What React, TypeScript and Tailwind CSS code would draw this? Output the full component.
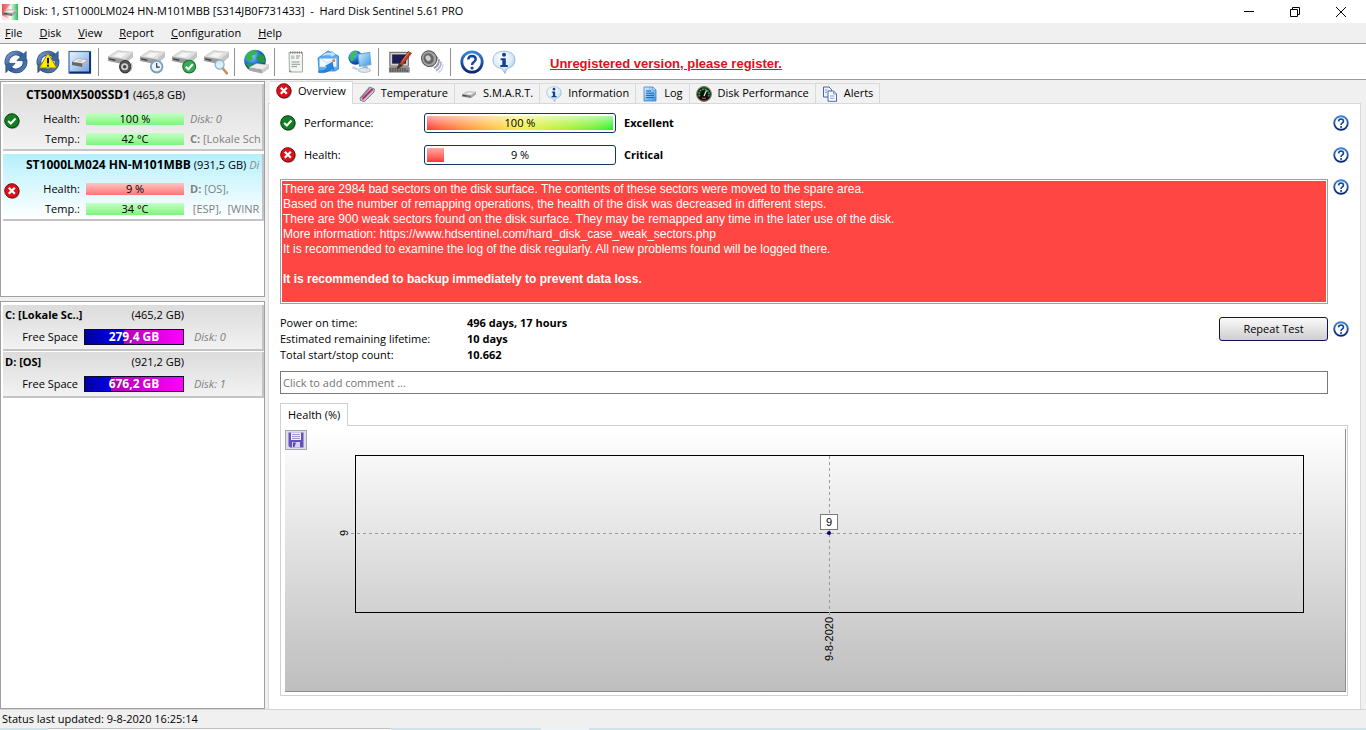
import React, { useState } from 'react';

interface Disk {
  name: string;
  size: string;
  index: string;
  health: number;
  temp: string;
  info: React.ReactNode;
  volumes: React.ReactNode;
  ok: boolean;
}

interface Volume {
  name: string;
  size: string;
  free: string;
  used: number;
  disk: string;
}

type IconProps = { className?: string };

// Shared gradients used by the icons below
const Gradients: React.FC = () => (
  <svg className="absolute h-0 w-0" aria-hidden="true">
    <defs>
      <linearGradient id="navy" gradientUnits="userSpaceOnUse" x1="2" y1="2" x2="24" y2="24">
        <stop offset="0" stopColor="#86a9d6" />
        <stop offset="0.5" stopColor="#2d5796" />
        <stop offset="1" stopColor="#5f86bd" />
      </linearGradient>
      <linearGradient id="sky" x1="0" y1="0" x2="1" y2="1">
        <stop offset="0" stopColor="#d5efff" />
        <stop offset="1" stopColor="#3a97e4" />
      </linearGradient>
      <radialGradient id="globe" cx="0.35" cy="0.3" r="0.8">
        <stop offset="0" stopColor="#8fd0ff" />
        <stop offset="0.5" stopColor="#1c6fd0" />
        <stop offset="1" stopColor="#06287a" />
      </radialGradient>
      <linearGradient id="ring" x1="0" y1="0" x2="0" y2="1">
        <stop offset="0" stopColor="#3a86d8" />
        <stop offset="1" stopColor="#0a2472" />
      </linearGradient>
      <radialGradient id="bubble" cx="0.4" cy="0.3" r="0.8">
        <stop offset="0" stopColor="#ffffff" />
        <stop offset="0.6" stopColor="#d6e8f8" />
        <stop offset="1" stopColor="#7fb0de" />
      </radialGradient>
      <linearGradient id="tile" x1="0" y1="0" x2="1" y2="1">
        <stop offset="0" stopColor="#eef6ff" />
        <stop offset="1" stopColor="#6b9ee2" />
      </linearGradient>
      <linearGradient id="appBack" x1="0" y1="0" x2="1" y2="0">
        <stop offset="0" stopColor="#f04040" />
        <stop offset="0.5" stopColor="#ffffff" />
        <stop offset="1" stopColor="#20c050" />
      </linearGradient>
    </defs>
  </svg>
);

const Drive: React.FC = () => (
  <g>
    <path d="M2 8.5 L11 2.5 L26 4 L18 11 Z" fill="#e0e0e0" stroke="#b5b5b5" strokeWidth="0.5" />
    <path d="M2 8.5 L18 11 L18 16 L2 12.5 Z" fill="#9c9c9c" />
    <path d="M18 11 L26 4 L26 9 L18 16 Z" fill="#c4c4c4" />
    <path d="M7 8 L12 4.5 L20 5.4 L15 9.2 Z" fill="#f6f6f6" />
    <path d="M3 10.5 L9 11.8" stroke="#444" strokeWidth="1.4" />
  </g>
);

const MiniDrive: React.FC = () => (
  <g>
    <path d="M1 8.5 L6.5 5.5 L15 6 L10 9.5 Z" fill="#d8d8d8" stroke="#9a9a9a" strokeWidth="0.4" />
    <path d="M1 8.5 L10 9.5 L10 12 L1 10.5 Z" fill="#777" />
    <path d="M10 9.5 L15 6 L15 8.5 L10 12 Z" fill="#a5a5a5" />
    <path d="M5.5 8 L8 6.7 L11.5 7 L9 8.5 Z" fill="#f5f5f5" />
    <path d="M2 9.4 L5 9.9" stroke="#333" strokeWidth="0.8" />
  </g>
);

const AppIcon: React.FC<IconProps> = ({ className }) => (
  <svg viewBox="0 0 16 16" className={className}>
    <rect width="16" height="16" fill="url(#appBack)" />
    <path d="M0 0 H9 L0 9 Z" fill="#ef5a58" opacity="0.6" />
    <path d="M0 16 V11 L8 16 Z" fill="#fff" opacity="0.8" />
    <MiniDrive />
  </svg>
);

const RefreshArrows: React.FC = () => (
  <g>
    <path d="M3.6 15.5 A9.6 9.6 0 0 1 19.5 6" fill="none" stroke="#1c3d70" strokeWidth="5.2" />
    <path d="M22.4 10.5 A9.6 9.6 0 0 1 6.5 20" fill="none" stroke="#1c3d70" strokeWidth="5.2" />
    <path d="M24 1.5 V11.5 H14 Z" fill="#3b669f" stroke="#1c3d70" strokeWidth="0.8" />
    <path d="M2 24.5 V14.5 H12 Z" fill="#3b669f" stroke="#1c3d70" strokeWidth="0.8" />
    <path d="M3.6 15.5 A9.6 9.6 0 0 1 19.5 6" fill="none" stroke="url(#navy)" strokeWidth="4" />
    <path d="M22.4 10.5 A9.6 9.6 0 0 1 6.5 20" fill="none" stroke="url(#navy)" strokeWidth="4" />
  </g>
);

const RefreshIcon = () => (
  <svg viewBox="0 0 26 26" className="h-6 w-6"><RefreshArrows /></svg>
);

const RefreshWarningIcon = () => (
  <svg viewBox="0 0 26 26" className="h-6 w-6">
    <RefreshArrows />
    <path d="M13 3.5 L22.5 19.5 H3.5 Z" fill="#ffee00" stroke="#8a7a00" strokeWidth="1" strokeLinejoin="round" />
    <path d="M13 8.5 V14.5" stroke="#111" strokeWidth="2.2" />
    <circle cx="13" cy="17" r="1.2" fill="#111" />
  </svg>
);

const SurfaceIcon = () => (
  <svg viewBox="0 0 24 24" className="h-6 w-6">
    <rect x="1" y="1.5" width="21.5" height="21.5" fill="url(#tile)" stroke="#3a68b8" strokeWidth="1.2" />
    <path d="M22 2 V22.5 H1.5" fill="none" stroke="#122a66" strokeWidth="1.8" />
    <path d="M4 12 L10 8.5 L19.5 10 L14.5 13.5 Z" fill="#f4f4f4" stroke="#888" strokeWidth="0.5" />
    <path d="M4 12 L14.5 13.5 V17 L4 15 Z" fill="#666" />
    <path d="M14.5 13.5 L19.5 10 V13 L14.5 17 Z" fill="#b5b5b5" />
    <ellipse cx="12" cy="11" rx="3" ry="1.1" fill="#c8c8c8" />
  </svg>
);

const DriveSpeakerIcon = () => (
  <svg viewBox="0 0 27 27" className="h-7 w-7">
    <Drive />
    <ellipse cx="18.5" cy="18" rx="5.4" ry="6" fill="#555" stroke="#333" />
    <circle cx="18" cy="18" r="3.4" fill="#d0d0d0" />
    <circle cx="18" cy="18" r="1.7" fill="#444" />
    <path d="M24.5 15 Q26 18 23.5 22.5" stroke="#aaa" fill="none" />
  </svg>
);

const DriveClockIcon = () => (
  <svg viewBox="0 0 27 27" className="h-7 w-7">
    <Drive />
    <circle cx="18" cy="18" r="5.6" fill="#e9f5fd" stroke="#7d9fba" strokeWidth="1.8" />
    <path d="M18 14.5 V18.5 H21" stroke="#223344" fill="none" strokeWidth="1.1" />
  </svg>
);

const DriveCheckIcon = () => (
  <svg viewBox="0 0 27 27" className="h-7 w-7">
    <Drive />
    <circle cx="18.5" cy="18" r="6.2" fill="#35ad53" stroke="#14702a" />
    <path d="M15.3 18 L17.8 20.5 L22 15.5" stroke="#fff" fill="none" strokeWidth="2" />
  </svg>
);

const DriveSearchIcon = () => (
  <svg viewBox="0 0 27 27" className="h-7 w-7">
    <Drive />
    <path d="M19.5 19 L24 24.5" stroke="#c98c5a" strokeWidth="2.4" strokeLinecap="round" />
    <circle cx="17" cy="16" r="4.3" fill="#d8f0fc" fillOpacity="0.9" stroke="#8fb3cc" strokeWidth="1.3" />
  </svg>
);

const GlobeDriveIcon = () => (
  <svg viewBox="0 0 28 28" className="h-7 w-7">
    <circle cx="13" cy="12.5" r="10.8" fill="url(#globe)" />
    <path d="M5 6.5 Q9 1.8 15 2 L14 5.5 L10 8 L11 11 L7 13.5 L3.5 11 Z" fill="#35b44a" />
    <path d="M14 10 L18 5.5 L22.5 8.5 L23 15 L18 14.5 Z" fill="#249a3d" />
    <path d="M4 16 L9 14.5 L11 20 L8 21 Z" fill="#249a3d" />
    <path d="M7 19.5 L14.5 15.5 L27 17 L20 22 Z" fill="#ededed" stroke="#aaa" strokeWidth="0.5" />
    <path d="M7 19.5 L20 22 V25.5 L7 22.5 Z" fill="#a8a8a8" />
    <path d="M20 22 L27 17 V20.5 L20 25.5 Z" fill="#cccccc" />
  </svg>
);

const ReportIcon = () => (
  <svg viewBox="0 0 24 24" className="h-6 w-6">
    <path d="M5 2.5 H18.5 V22 H5.5 Z" fill="#f3f5f2" stroke="#a3aaa3" />
    <path d="M6 2.5 H18" stroke="#777" strokeWidth="2" strokeDasharray="1.2 1" />
    <path d="M12 6 H16 M12 8 H15 M7.5 12 H15.5 M7.5 14.3 H16 M7.5 16.6 H13" stroke="#8f9a94" />
    <rect x="7" y="5.5" width="3.4" height="3.4" fill="#b9cdbd" />
    <path d="M5 22 L6 20 L8 22 Z" fill="#6f9f77" />
  </svg>
);

const MailIcon = () => (
  <svg viewBox="0 0 24 24" className="h-6 w-6">
    <path d="M2 8 L12 1 L22.5 6 V19 L19 21 H3 Z" fill="#5aaef0" stroke="#2b7ed0" strokeWidth="0.8" />
    <path d="M3.5 8.5 H20.5 V17 H3.5 Z" fill="#f5faff" stroke="#9bc3ea" strokeWidth="0.6" />
    <path d="M4 8.5 L11 13 L20 8.5" fill="none" stroke="#b9d3ec" strokeWidth="0.8" />
    <rect x="16.5" y="9.3" width="2.6" height="2.6" fill="#d97b5a" />
    <path d="M5 7 Q8 1.5 15 2.5 L15.5 1 L20 5 L14.5 7.5 L14.7 5.8 Q9 5 5 7 Z" fill="#bfe2ff" stroke="#3a8fe0" strokeWidth="0.5" />
    <path d="M2.5 21 Q9 22 12 17 L9.5 16 L16.5 12 L17.5 19.5 L15.5 18.5 Q11 24 2.5 22.5 Z" fill="#2586e4" stroke="#0d5db0" strokeWidth="0.5" />
  </svg>
);

const NetworkIcon = () => (
  <svg viewBox="0 0 25 25" className="h-6 w-6">
    <circle cx="7.8" cy="8" r="7.4" fill="url(#globe)" />
    <path d="M3 4 Q6 1 10 1.5 L8 6 L5 8 L6 11 L3.5 12 L1.5 8 Z" fill="#3cbf55" />
    <path d="M10.5 4.5 L22.5 2.5 L23.8 15 L12 17 Z" fill="url(#sky)" stroke="#6aa8dc" strokeWidth="1.2" />
    <path d="M16 16.5 H20 L21 19.5 H15 Z" fill="#9db6cc" />
    <ellipse cx="17" cy="21" rx="6.5" ry="2.4" fill="#d9e5ef" stroke="#8ba4ba" strokeWidth="0.6" />
    <path d="M5 17 L11 19 L9 21 L4 19 Z" fill="#b8d3ea" />
  </svg>
);

const DesktopPenIcon = () => (
  <svg viewBox="0 0 26 26" className="h-6 w-6">
    <rect x="2" y="2.5" width="20" height="15" fill="#cfcfcf" stroke="#555" />
    <rect x="4.5" y="4.8" width="15" height="10" fill="#1c1c50" />
    <path d="M1 18.5 H23.5 V24.5 H1 Z" fill="#8a8a8a" />
    <path d="M2 20.5 H20 M2 22.7 H22" stroke="#2a2a2a" strokeDasharray="1.6 1" />
    <path d="M10 20 L12.5 14.5 L22 1.5 L25.5 3.5 L15 17.5 Z" fill="#b5432c" stroke="#5e1f12" strokeWidth="0.6" />
    <path d="M10 20 L12.5 14.5 L15 17 Z" fill="#4a3a34" stroke="#222" strokeWidth="0.5" />
    <path d="M15 12.5 L22.5 2.8" stroke="#ef8a5c" />
  </svg>
);

const SpeakerIcon = () => (
  <svg viewBox="0 0 25 25" className="h-6 w-6">
    <path d="M13 2 L19 8 L14 17 L7 18 Z" fill="#7a7a7a" />
    <ellipse cx="9.5" cy="9" rx="7.8" ry="8.3" fill="#a4a4a4" stroke="#555" transform="rotate(-28 9.5 9)" />
    <ellipse cx="9" cy="9" rx="5.2" ry="5.8" fill="#666" transform="rotate(-28 9 9)" />
    <ellipse cx="8.5" cy="8.5" rx="2.6" ry="3.1" fill="#cfcfcf" transform="rotate(-28 8.5 8.5)" />
    <path d="M19.5 9.5 Q20.5 15.5 14.5 19" fill="none" stroke="#9095ac" strokeWidth="2" />
    <path d="M21.8 12 Q22.5 18.5 16.5 21.5" fill="none" stroke="#b0b4c8" strokeWidth="1.8" />
    <path d="M23.8 15 Q24 20.5 19 23.5" fill="none" stroke="#cfd1de" strokeWidth="1.4" />
  </svg>
);

const HelpIcon: React.FC<IconProps> = ({ className }) => (
  <svg viewBox="0 0 24 24" className={className}>
    <circle cx="12" cy="12" r="10.2" fill="#fff" stroke="url(#ring)" strokeWidth="2.8" />
    <path d="M8.3 9.5 Q8.5 6 12 6 Q15.7 6.1 15.7 9.2 Q15.6 11 13.6 12.2 Q12.1 13.1 12.1 15" fill="none" stroke="#15469c" strokeWidth="2.5" />
    <circle cx="12.1" cy="18" r="1.6" fill="#15469c" />
  </svg>
);

const InfoIcon: React.FC<IconProps> = ({ className }) => (
  <svg viewBox="0 0 24 24" className={className}>
    <path d="M12 1 Q23 1.5 23 10 Q22.8 17 15 18.6 L13 23.5 L10 18.7 Q1 17.5 1 10 Q1 1.5 12 1 Z" fill="url(#bubble)" stroke="#8fb2d4" strokeWidth="0.8" />
    <circle cx="12" cy="4.8" r="2" fill="#153f94" />
    <path d="M8.6 8.2 H13.8 V15 H15.8 V17 H8.4 V15 H10.3 V10.2 H8.6 Z" fill="#153f94" />
  </svg>
);

const OkIcon: React.FC<IconProps> = ({ className }) => (
  <svg viewBox="0 0 16 16" className={className}>
    <circle cx="8.6" cy="8.6" r="7.2" fill="#7d857d" />
    <circle cx="7.8" cy="7.8" r="7.1" fill="#108020" stroke="#06400e" strokeWidth="1" />
    <path d="M4.2 8 L6.8 10.5 L11.5 5.5" fill="none" stroke="#fff" strokeWidth="2" />
  </svg>
);

const ErrorIcon: React.FC<IconProps> = ({ className }) => (
  <svg viewBox="0 0 16 16" className={className}>
    <circle cx="8.6" cy="8.6" r="7.2" fill="#8a7d7d" />
    <circle cx="7.8" cy="7.8" r="7.1" fill="#e01018" stroke="#7c060a" strokeWidth="1" />
    <path d="M4.8 4.8 L10.8 10.8 M10.8 4.8 L4.8 10.8" stroke="#fff" strokeWidth="2.3" />
  </svg>
);

const TemperatureIcon: React.FC = () => (
  <svg viewBox="0 0 16 16" className="h-4 w-4">
    <path d="M1 12 L10.5 1 L15.5 3 L15 6 L5.5 15.5 L1.5 14.5 Z" fill="#c9c3cc" stroke="#6b6470" strokeWidth="0.8" />
    <path d="M4 12.5 L13 3.5" stroke="#b02a6a" strokeWidth="2" strokeLinecap="round" />
    <path d="M2.5 11.5 L10.5 2.5" stroke="#555" strokeWidth="0.8" />
  </svg>
);

const SmartIcon: React.FC = () => (
  <svg viewBox="0 0 16 16" className="h-4 w-4"><MiniDrive /></svg>
);

const LogIcon: React.FC = () => (
  <svg viewBox="0 0 16 16" className="h-4 w-4">
    <path d="M2 1 H11 L14 4 V15 H2 Z" fill="url(#sky)" stroke="#3a86c8" strokeWidth="0.8" />
    <path d="M11 1 V4 H14 Z" fill="#fff" stroke="#3a86c8" strokeWidth="0.6" />
    <path d="M4 5 H9 M4 7.2 H12 M4 9.4 H12 M4 11.6 H12" stroke="#1d62a8" strokeWidth="1" />
  </svg>
);

const GaugeIcon: React.FC = () => (
  <svg viewBox="0 0 16 16" className="h-4 w-4">
    <circle cx="8" cy="8" r="7.4" fill="#111" stroke="#8a7a6a" strokeWidth="1.1" />
    <path d="M3.6 10.5 A5 5 0 1 1 12.4 10.5" fill="none" stroke="#2fae4a" strokeWidth="1.7" strokeDasharray="2 0.7" />
    <path d="M8 10 L10.5 4.5" stroke="#f2f2f2" strokeWidth="1.2" />
    <path d="M6 12.3 H10" stroke="#d63b2c" strokeWidth="1.2" />
  </svg>
);

const AlertsIcon: React.FC = () => (
  <svg viewBox="0 0 16 16" className="h-4 w-4">
    <path d="M1.5 1 H7 L9.5 3.5 V11 H1.5 Z" fill="#eef3fc" stroke="#35579c" strokeWidth="0.9" />
    <path d="M6 5 H11.5 L14.5 8 V15.3 H6 Z" fill="#fff" stroke="#35579c" strokeWidth="0.9" />
    <path d="M11.5 5 V8 H14.5 M8 10 H12.5 M8 12.3 H12.5 M3 4 H5.5 M3 6.3 H5" fill="none" stroke="#6f8fce" strokeWidth="0.9" />
  </svg>
);

const SaveIcon: React.FC = () => (
  <svg viewBox="0 0 16 16" className="h-4 w-4">
    <path d="M0.5 0.5 H15.5 V15.5 H2 L0.5 14 Z" fill="#6650c0" />
    <rect x="3" y="0.5" width="10" height="7.5" fill="#f3f0fb" />
    <path d="M4 2.5 H12 M4 4.5 H12 M4 6.5 H12" stroke="#8a7bc9" strokeWidth="0.8" />
    <rect x="4" y="10" width="8" height="5.5" fill="#d9d2f0" />
    <path d="M5 10.5 H8 L6.5 15 H5 Z" fill="#5b45b8" />
  </svg>
);

const menus = ['File', 'Disk', 'View', 'Report', 'Configuration', 'Help'];

const toolbar = [
  [
    { label: 'Refresh', icon: <RefreshIcon /> },
    { label: 'Refresh with warning', icon: <RefreshWarningIcon /> },
    { label: 'Surface test', icon: <SurfaceIcon /> },
  ],
  [
    { label: 'Acoustic', icon: <DriveSpeakerIcon /> },
    { label: 'Short self test', icon: <DriveClockIcon /> },
    { label: 'Extended self test', icon: <DriveCheckIcon /> },
    { label: 'Disk search', icon: <DriveSearchIcon /> },
  ],
  [{ label: 'Online disk information', icon: <GlobeDriveIcon /> }],
  [
    { label: 'Report', icon: <ReportIcon /> },
    { label: 'Send report', icon: <MailIcon /> },
    { label: 'Network', icon: <NetworkIcon /> },
  ],
  [
    { label: 'Preferences', icon: <DesktopPenIcon /> },
    { label: 'Sounds', icon: <SpeakerIcon /> },
  ],
  [
    { label: 'Help', icon: <HelpIcon className="h-6 w-6" /> },
    { label: 'About', icon: <InfoIcon className="h-6 w-6" /> },
  ],
];

const tabs = [
  { label: 'Overview', icon: <ErrorIcon className="h-4 w-4" /> },
  { label: 'Temperature', icon: <TemperatureIcon /> },
  { label: 'S.M.A.R.T.', icon: <SmartIcon /> },
  { label: 'Information', icon: <InfoIcon className="h-4 w-4" /> },
  { label: 'Log', icon: <LogIcon /> },
  { label: 'Disk Performance', icon: <GaugeIcon /> },
  { label: 'Alerts', icon: <AlertsIcon /> },
];

const disks: Disk[] = [
  {
    name: 'CT500MX500SSD1',
    size: '(465,8 GB)',
    index: '',
    health: 100,
    temp: '42 °C',
    info: <i>Disk: 0</i>,
    volumes: <><b>C:</b> [Lokale Sch</>,
    ok: true,
  },
  {
    name: 'ST1000LM024 HN-M101MBB',
    size: '(931,5 GB)',
    index: 'Di',
    health: 9,
    temp: '34 °C',
    info: <><b>D:</b> [OS],</>,
    volumes: <>&nbsp;[ESP],&nbsp; [WINR</>,
    ok: false,
  },
];

const volumes: Volume[] = [
  { name: 'C: [Lokale Sc..]', size: '(465,2 GB)', free: '279,4 GB', used: 40, disk: 'Disk: 0' },
  { name: 'D: [OS]', size: '(921,2 GB)', free: '676,2 GB', used: 27, disk: 'Disk: 1' },
];

const Meter: React.FC<{ text: string; bad?: boolean }> = ({ text, bad }) => (
  <div
    className={`h-3 text-center leading-3 bg-linear-to-b ${
      bad ? 'from-[#ffc4c4] to-[#ff7474]' : 'from-[#c4ffc4] to-[#7cf47c]'
    }`}
  >
    {text}
  </div>
);

const DiskCard: React.FC<{ disk: Disk; selected: boolean; onSelect: () => void }> = ({ disk, selected, onSelect }) => (
  <button
    type="button"
    onClick={onSelect}
    className={`grid w-full grid-cols-[16px_54px_98px_minmax(0,1fr)] items-center gap-x-1.5 whitespace-nowrap border-r-2 border-b-2 border-[#c4c4c4] pl-px text-left leading-5 bg-linear-to-b ${
      selected ? 'from-[#b4f0fc] to-white' : 'from-[#dcdcdc] to-[#f2f2f2]'
    }`}
  >
    <span className="row-span-3 pt-2">
      {disk.ok ? <OkIcon className="h-4 w-4" /> : <ErrorIcon className="h-4 w-4" />}
    </span>
    <span className="col-span-3 overflow-hidden pb-[3px] leading-[22px]">
      <b className="text-[12px]">{disk.name}</b> {disk.size} <i className="text-[#8a8a8a]">{disk.index}</i>
    </span>
    <span className="text-right">Health:</span>
    <Meter text={`${disk.health} %`} bad={disk.health < 50} />
    <span className="overflow-hidden text-[#808080]">{disk.info}</span>
    <span className="text-right">Temp.:</span>
    <Meter text={disk.temp} />
    <span className="overflow-hidden text-[#808080]">{disk.volumes}</span>
  </button>
);

const VolumeCard: React.FC<{ volume: Volume }> = ({ volume }) => (
  <div className="grid grid-cols-[73px_100px_minmax(0,1fr)] items-center gap-x-1.5 whitespace-nowrap border-r-2 border-b-2 border-[#c4c4c4] bg-linear-to-b from-[#dcdcdc] to-[#f2f2f2] pl-0.5">
    <div className="col-span-2 flex justify-between leading-5">
      <b>{volume.name}</b>
      <span>{volume.size}</span>
    </div>
    <span />
    <span className="text-right leading-6">Free Space</span>
    <div className="relative h-4 border border-[#100830] bg-linear-to-r from-[#900090] to-[#ff00ff]">
      <div className="h-full bg-linear-to-r from-[#0000a0] to-[#0000f0]" style={{ width: `${volume.used}%` }} />
      <b className="absolute inset-0 text-center text-[12px] leading-[14px] text-white">{volume.free}</b>
    </div>
    <i className="pl-1 text-[#808080]">{volume.disk}</i>
  </div>
);

const HelpButton: React.FC<{ topic: string }> = ({ topic }) => (
  <button type="button" aria-label={topic}>
    <HelpIcon className="h-4 w-4" />
  </button>
);

const StatusRow: React.FC<{ label: string; value: number; verdict: string; ok: boolean }> = ({ label, value, verdict, ok }) => (
  <div className="flex h-8 items-center">
    {ok ? <OkIcon className="h-4 w-4" /> : <ErrorIcon className="h-4 w-4" />}
    <span className="w-32 pl-2">{label}</span>
    <div className="relative h-5 w-48 rounded-[3px] border border-[#17365d] bg-white p-0.5">
      <div className="h-full overflow-hidden" style={{ width: `${value}%` }}>
        {ok ? (
          <div className="h-full bg-linear-to-r from-[#ff3030] via-[#f4f040] to-[#10f020]">
            <div className="h-full bg-linear-to-b from-white/60 to-transparent" />
          </div>
        ) : (
          <div className="h-full bg-linear-to-b from-[#ffa8a8] to-[#ff3030]" />
        )}
      </div>
      <span className="absolute inset-0 text-center leading-[18px]">{value} %</span>
    </div>
    <b className="flex-1 pl-2">{verdict}</b>
    <HelpButton topic={`About ${label}`} />
  </div>
);

const HealthChart: React.FC = () => (
  <svg viewBox="0 0 1060 262" className="block w-full font-['Liberation_Sans',sans-serif] text-[11px]">
    <rect x="70.5" y="26.5" width="948" height="157" fill="none" stroke="#000" />
    <path d="M66 104.5 H1018 M544.5 27 V187" stroke="#9a9a9a" strokeDasharray="3 3" fill="none" />
    <rect x="535.5" y="85.5" width="17" height="15" fill="#fff" stroke="#000" strokeDasharray="1 1" />
    <text x="544" y="97" textAnchor="middle">9</text>
    <circle cx="544" cy="104" r="2" fill="#000080" />
    <text transform="translate(63 104) rotate(-90)" textAnchor="middle">9</text>
    <text transform="translate(548 210) rotate(-90)" textAnchor="middle">9-8-2020</text>
  </svg>
);

const App: React.FC = () => {
  const [activeTab, setActiveTab] = useState('Overview');
  const [activeDisk, setActiveDisk] = useState(1);

  return (
    <div className="flex min-h-screen flex-col bg-[#f0f0f0] font-['Open_Sans','Noto_Sans',sans-serif] text-[11px] text-black">
      <Gradients />

      {/* Title bar */}
      <header className="flex h-[23px] items-center bg-white pr-0.5 pl-0.5">
        <AppIcon className="h-4 w-4" />
        <h1 className="flex-1 whitespace-pre pl-[5px] text-[11px]">
          Disk: 1, ST1000LM024 HN-M101MBB [S314JB0F731433]  -  Hard Disk Sentinel 5.61 PRO
        </h1>
        <button type="button" aria-label="Minimize" className="flex w-[46px] justify-center">
          <svg viewBox="0 0 12 12" className="h-3 w-3"><path d="M1 5.5 H11" stroke="#000" /></svg>
        </button>
        <button type="button" aria-label="Restore" className="flex w-[46px] justify-center">
          <svg viewBox="0 0 12 12" className="h-3 w-3"><path d="M1.5 3.5 H8.5 V10.5 H1.5 Z M3.5 3.5 V1.5 H10.5 V8.5 H8.5" fill="none" stroke="#000" /></svg>
        </button>
        <button type="button" aria-label="Close" className="flex w-[46px] justify-center">
          <svg viewBox="0 0 12 12" className="h-3 w-3"><path d="M1 1 L11 11 M11 1 L1 11" stroke="#000" /></svg>
        </button>
      </header>

      {/* Menu */}
      <nav className="flex h-5 items-center gap-[17px] pl-[5px]">
        {menus.map((menu) => (
          <button key={menu} type="button">
            <span className="underline">{menu[0]}</span>
            {menu.slice(1)}
          </button>
        ))}
      </nav>

      {/* Toolbar */}
      <div className="flex h-[37px] items-center border-y border-[#9a9a9a] bg-white">
        {toolbar.map((group, i) => (
          <React.Fragment key={i}>
            {i > 0 && <div className="mr-[5px] ml-0.5 h-7 w-px bg-[#909090]" />}
            {group.map((item) => (
              <button key={item.label} type="button" aria-label={item.label} className="flex w-8 justify-center">
                {item.icon}
              </button>
            ))}
          </React.Fragment>
        ))}
        <a href="#register" className="ml-[30px] pt-1 font-['Liberation_Sans',sans-serif] text-[13px] font-bold text-[#e0101c] underline">
          Unregistered version, please register.
        </a>
      </div>

      <div className="flex flex-1 gap-[3px]">
        {/* Disk and volume lists */}
        <aside className="flex w-[265px] shrink-0 flex-col gap-1 pt-px">
          <div className="flex h-[216px] flex-col gap-[3px] border border-[#a0a0a0] bg-white pt-0.5 pl-0.5">
            {disks.map((disk, i) => (
              <DiskCard key={disk.name} disk={disk} selected={i === activeDisk} onSelect={() => setActiveDisk(i)} />
            ))}
          </div>
          <div className="flex flex-1 flex-col gap-px border border-[#a0a0a0] bg-white pt-[3px] pl-0.5">
            {volumes.map((volume) => (
              <VolumeCard key={volume.name} volume={volume} />
            ))}
          </div>
        </aside>

        <main className="flex flex-1 flex-col pr-[5px]">
          <div role="tablist" className="flex h-[23px] items-end pl-0.5">
            {tabs.map((tab) => (
              <button
                key={tab.label}
                type="button"
                role="tab"
                aria-selected={tab.label === activeTab}
                onClick={() => setActiveTab(tab.label)}
                className={`flex items-center gap-1.5 border-t border-r border-[#d9d9d9] px-1.5 whitespace-nowrap ${
                  tab.label === activeTab ? 'relative -mb-px h-[23px] bg-white pb-1' : 'h-5 bg-[#f2f2f2]'
                }`}
              >
                {tab.icon}
                {tab.label}
              </button>
            ))}
          </div>

          <section className="flex flex-1 flex-col border border-b-0 border-[#d9d9d9] bg-white pt-[3px] pr-[11px] pb-3 pl-[11px]">
            <StatusRow label="Performance:" value={100} verdict="Excellent" ok />
            <StatusRow label="Health:" value={9} verdict="Critical" ok={false} />

            <div className="mt-2 flex items-start gap-[5px]">
              <div className="h-[125px] flex-1 border border-[#a0a0a0] bg-white p-px">
                <div className="h-full bg-[#ff4643] pt-px pl-px font-['Liberation_Sans',sans-serif] text-[12px] leading-[15px] text-white">
                  <p>There are 2984 bad sectors on the disk surface. The contents of these sectors were moved to the spare area.</p>
                  <p>Based on the number of remapping operations, the health of the disk was decreased in different steps.</p>
                  <p>There are 900 weak sectors found on the disk surface. They may be remapped any time in the later use of the disk.</p>
                  <p>More information: https://www.hdsentinel.com/hard_disk_case_weak_sectors.php</p>
                  <p>It is recommended to examine the log of the disk regularly. All new problems found will be logged there.</p>
                  <p className="mt-[15px] font-bold">It is recommended to backup immediately to prevent data loss.</p>
                </div>
              </div>
              <HelpButton topic="About the disk status" />
            </div>

            <div className="mt-[11px] flex items-start">
              <dl className="grid flex-1 grid-cols-[187px_1fr] leading-4">
                <dt>Power on time:</dt>
                <dd className="font-bold">496 days, 17 hours</dd>
                <dt>Estimated remaining lifetime:</dt>
                <dd className="font-bold">10 days</dd>
                <dt>Total start/stop count:</dt>
                <dd className="font-bold">10.662</dd>
              </dl>
              <div className="flex items-center gap-[5px] pt-0.5">
                <button
                  type="button"
                  className="h-6 w-[109px] rounded-[3px] border border-[#10105c] bg-linear-to-b from-[#fafafa] to-[#cfcfcf]"
                >
                  Repeat Test
                </button>
                <HelpButton topic="About the test" />
              </div>
            </div>

            <input
              type="text"
              aria-label="Comment"
              placeholder="Click to add comment ..."
              className="mt-2 mr-[21px] h-[23px] border border-[#7a7a7a] bg-white px-0.5 placeholder:text-[#757575]"
            />

            {/* Health history */}
            <div className="mt-[9px] flex">
              <button type="button" className="relative -mb-px h-[23px] border border-b-0 border-[#d0d0d0] bg-white px-[7px]">
                Health (%)
              </button>
            </div>
            <div className="mr-px border border-[#d0d0d0] py-[3px] pr-px pl-1">
              <div className="relative border-r border-b border-[#8c8c8c] bg-linear-to-b from-white to-[#bebebe]">
                <HealthChart />
                <button
                  type="button"
                  aria-label="Save chart"
                  className="absolute top-px left-0 flex h-5 w-[22px] items-center justify-center border border-[#a8a8a8] bg-[#dedee6]"
                >
                  <SaveIcon />
                </button>
              </div>
            </div>
          </section>
        </main>
      </div>

      {/* Status bar */}
      <footer className="border-t border-[#d4d4d4]">
        <p className="h-[18px] pl-0.5 leading-[18px]">Status last updated: 9-8-2020 16:25:14</p>
        <div className="flex h-0.5 bg-[#d2e2ea]">
          <div className="ml-12 w-[343px] border-t border-[#c0c0c0] bg-white" />
          <div className="ml-[150px] w-12 bg-[#eaf4f8]" />
        </div>
      </footer>
    </div>
  );
};

export default App;
